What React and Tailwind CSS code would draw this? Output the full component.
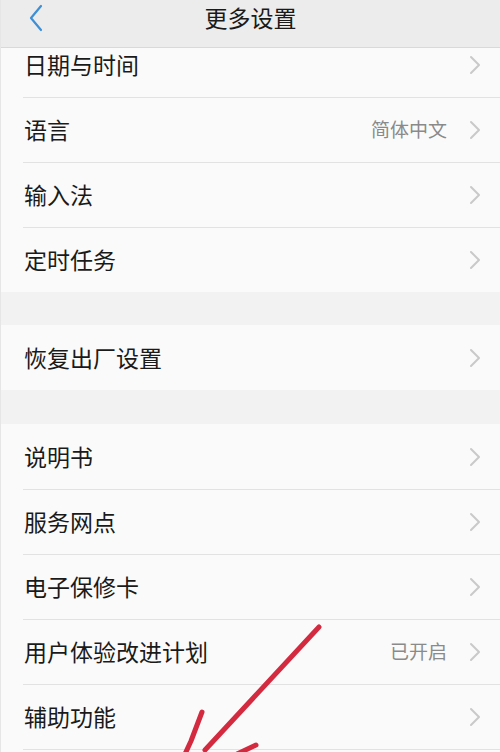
import React from "react";

const Chevron = () => (
  <svg width="12" height="20" viewBox="0 0 12 20" className="shrink-0">
    <path d="M2 2 L10 10 L2 18" fill="none" stroke="#c9c9c9" strokeWidth="2" strokeLinecap="round" strokeLinejoin="round" />
  </svg>
);

const Row = ({ label, value, first }) => (
  <div className="relative flex h-[65px] items-center bg-[#fafafa] pl-[23px] pr-[19px]">
    {!first && <div className="absolute left-[22px] right-0 top-0 h-px bg-[#e2e2e2]" />}
    <span className="flex-1 text-[23px] text-[#1a1a1a]">{label}</span>
    {value && <span className="mr-[22px] text-[19px] text-[#8a8a8a]">{value}</span>}
    <Chevron />
  </div>
);

const Gap = () => <div className="h-[33px] bg-[#f2f2f2]" />;

export default function App() {
  return (
    <div
      className="relative h-[752px] w-[500px] overflow-hidden border-l border-[#e6e6e6] bg-[#f2f2f2]"
      style={{ fontFamily: '"Noto Sans CJK SC", "Noto Sans", sans-serif' }}
    >
      <div className="relative z-10 flex h-[48px] items-center justify-center border-b border-[#d9d9d9] bg-[#ececec]">
        <svg width="16" height="28" viewBox="0 0 16 28" className="absolute left-[27px] top-[4px]">
          <path d="M13 2 L3 14 L13 26" fill="none" stroke="#3d8fd6" strokeWidth="2.2" strokeLinecap="round" strokeLinejoin="round" />
        </svg>
        <span className="-mt-[12px] text-[23px] text-[#1a1a1a]">更多设置</span>
      </div>
      <div className="-mt-[16px]">
        <Row label="日期与时间" first />
        <Row label="语言" value="简体中文" />
        <Row label="输入法" />
        <Row label="定时任务" />
        <Gap />
        <Row label="恢复出厂设置" first />
        <div className="h-[34px] bg-[#f2f2f2]" />
        <Row label="说明书" first />
        <Row label="服务网点" />
        <Row label="电子保修卡" />
        <Row label="用户体验改进计划" value="已开启" />
        <Row label="辅助功能" />
        <Row label="" />
      </div>
      <svg className="pointer-events-none absolute left-0 top-0 z-20" width="500" height="752" viewBox="0 0 500 752">
        <g fill="none" stroke="#d42a40" strokeWidth="5" strokeLinecap="round" strokeLinejoin="round">
          <path d="M318 627 L204 750" />
          <path d="M201 712 L190 741 L184 754" />
          <path d="M255 745 L236 754" />
        </g>
      </svg>
    </div>
  );
}
